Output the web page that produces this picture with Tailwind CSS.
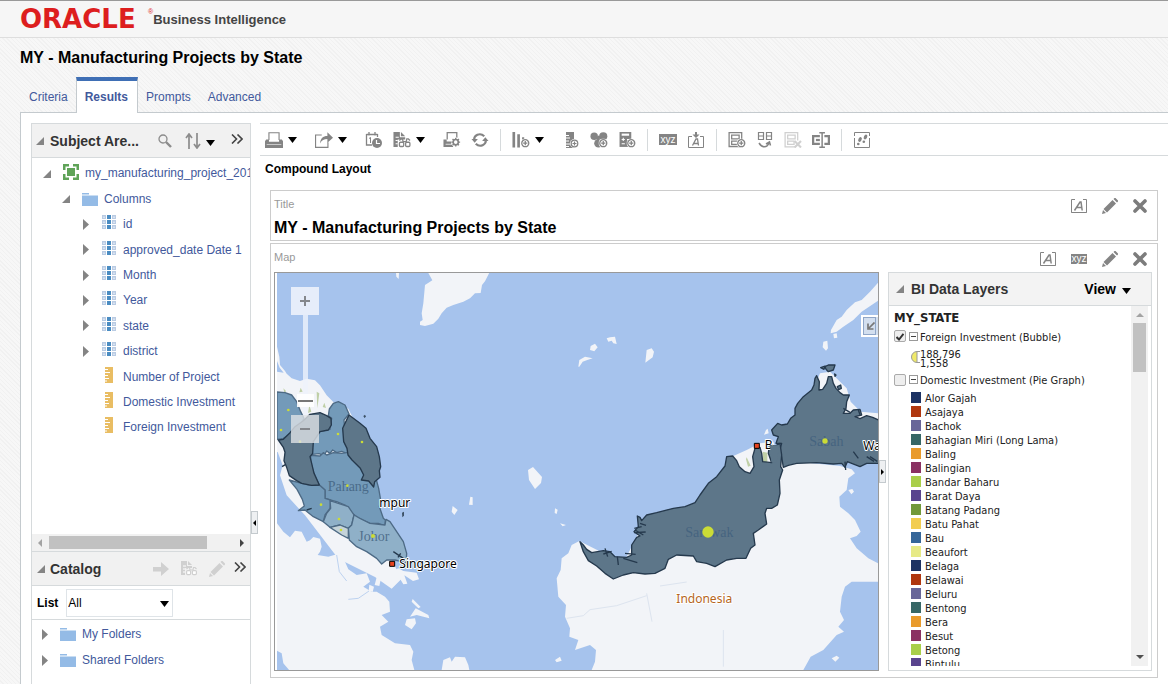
<!DOCTYPE html>
<html lang="en">
<head>
    <meta charset="UTF-8">
    <meta name="viewport" content="width=device-width, initial-scale=1.0">
    <title>MY - Manufacturing Projects by State</title>
    <script src="https://cdn.jsdelivr.net/npm/@tailwindcss/browser@4"></script>
</head>
<body class="h-screen flex flex-col overflow-hidden bg-[#f5f5f5] bg-[repeating-linear-gradient(45deg,#f7f7f7_0px,#f7f7f7_2px,#f1f1f1_2px,#f1f1f1_3px)] font-['Liberation_Sans',Arial,sans-serif] text-xs text-black">

    <!-- Icon sprite -->
    <svg class="hidden">
        <symbol id="i-caret" viewBox="0 0 9 6"><path d="M0 0h9L4.500 6z" fill="#000"/></symbol>
        <symbol id="i-open" viewBox="0 0 8 8"><path d="M8 0v8H0z" fill="#848484"/></symbol>
        <symbol id="i-closed" viewBox="0 0 6 11"><path d="M0 0l6 5.500L0 11z" fill="#848484"/></symbol>
        <symbol id="i-more" viewBox="0 0 12 10"><path d="M1 .5L5.500 5 1 9.500M6.500 .5L11 5l-4.500 4.500" fill="none" stroke="#444" stroke-width="1.600"/></symbol>
        <symbol id="i-search" viewBox="0 0 14 14"><circle cx="5" cy="5" r="4" fill="none" stroke="#8c8c8c" stroke-width="1.300"/><path d="M8 8l5 5" stroke="#8c8c8c" stroke-width="2.400"/></symbol>
        <symbol id="i-sort" viewBox="0 0 16 16"><path d="M4 16V2M1 5l3-4 3 4M12 0v14M9 11l3 4 3-4" fill="none" stroke="#8c8c8c" stroke-width="1.700"/></symbol>
        <symbol id="i-area" viewBox="0 0 16 16"><path d="M4 4h8v8H4z" fill="#5fa358"/><path d="M0 6V0h6v2.500H2.500V6zM10 0h6v6h-2.500V2.500H10zM16 10v6h-6v-2.500h3.500V10zM6 16H0v-6h2.500v3.500H6z" fill="#5fa358"/></symbol>
        <symbol id="i-folder" viewBox="0 0 16 13"><path d="M0 0h7v1.500H0zM0 2.500h16V13H0z" fill="#94bbe6"/></symbol>
        <symbol id="i-column" viewBox="0 0 14 14">
            <path d="M0 0h4v4H0zM0 5h4v4H0zM0 10h4v4H0zM10 0h4v4h-4zM10 5h4v4h-4zM10 10h4v4h-4z" fill="#b9cbe3"/>
            <path d="M1 1.500h2v1.500H1zM1 6.500h2v1.500H1zM1 11.500h2v1.500H1zM11 1.500h2v1.500h-2zM11 6.500h2v1.500h-2zM11 11.500h2v1.500h-2z" fill="#d9e3f1"/>
            <path d="M5 0h4v4H5zM5 5h4v4H5zM5 10h4v4H5z" fill="#4a8cc2"/>
        </symbol>
        <symbol id="i-measure" viewBox="0 0 8 16"><path d="M0 0h8v16H0z" fill="#e9bd63"/><path d="M0 2.500h3M0 5.500h5M0 8.500h3M0 11.500h4M0 14h2" stroke="#fff"/></symbol>
        <symbol id="i-arrow" viewBox="0 0 16 14"><path d="M0 5h8V0l8 7-8 7V9.500H0z" fill="#d0d0d0"/></symbol>
        <symbol id="i-print" viewBox="0 0 16 14"><path d="M3.500 7V.5h9V7" fill="none" stroke="#848484"/><path d="M1 6.500h2.500v2h9v-2H15l1 1.500v6H0V8z" fill="#848484"/><path d="M1.500 11h13" stroke="#ddd" stroke-width=".7"/></symbol>
        <symbol id="i-export" viewBox="0 0 16 14"><path d="M6 2.500H.5v11h11V9" fill="none" stroke="#848484"/><path d="M4.500 10C5 5.500 7 3.500 11 3.500V0l5 5-5 4.500V6C8 6 6 7 4.500 10z" fill="#848484"/></symbol>
        <symbol id="i-schedule" viewBox="0 0 16 16"><path d="M.5 2.500h11M.5 2v11H6M3 0v3.500M9 0v3.500M11.500 2v3" fill="none" stroke="#848484" stroke-width="1.300"/><path d="M3 6.500l1.500-1V11" fill="none" stroke="#848484"/><circle cx="11" cy="11" r="5" fill="#848484"/><path d="M10.500 8v3.500H14" fill="none" stroke="#fff" stroke-width="1.200"/></symbol>
        <symbol id="i-find" viewBox="0 0 16 15"><path d="M0 0h6v5h5v2H4v7H0z" fill="currentColor"/><path d="M7 0l4 4H7z" fill="currentColor"/><path d="M2 5h3M2 8h2M2 11h2" stroke="#fff"/><path d="M5.500 8L7 6.500h1.500L9 9h3l.5-2.500H14L15.500 8" fill="none" stroke="currentColor" stroke-width="1.200"/><rect x="5.600" y="9.600" width="4" height="4" rx="1" fill="#fff" stroke="currentColor" stroke-width="1.200"/><rect x="11.400" y="9.600" width="4" height="4" rx="1" fill="#fff" stroke="currentColor" stroke-width="1.200"/></symbol>
        <symbol id="i-gear" viewBox="-4.500 -4.500 9 9"><circle r="4.500" fill="#fff"/><circle r="2.400" fill="none" stroke="#848484" stroke-width="1.500"/><path d="M0-4.200v1.600M0 2.600v1.600M-4.200 0h1.600M2.600 0h1.600M-3-3l1.200 1.200M3 3L1.800 1.800M3-3L1.800-1.800M-3 3l1.200-1.200" stroke="#848484" stroke-width="1.300"/></symbol>
        <symbol id="i-plus" viewBox="-4.500 -4.500 9 9"><circle r="4.500" fill="#fff"/><circle r="3.300" fill="none" stroke="#848484" stroke-width="1.200"/><path d="M-2 0h4M0-2v4" stroke="#848484" stroke-width="1.200"/></symbol>
        <symbol id="i-print-options" viewBox="0 0 16 15"><path d="M3.500 7V.5h9V6" fill="none" stroke="#848484" stroke-width="1.200"/><path d="M0 7h3v2h6v5H0z" fill="#848484"/><path d="M2 11.500h6" stroke="#fff" stroke-width=".7"/><use href="#i-gear" x="7" y="5" width="9" height="9"/></symbol>
        <symbol id="i-refresh" viewBox="0 0 16 15"><path d="M2.500 8C2 3 8 0 12 4" fill="none" stroke="#848484" stroke-width="2"/><path d="M0 6.500h6L3 10zM16 8.500h-6L13 5z" fill="#848484"/><path d="M13.500 7C14 12 8 15 4 11" fill="none" stroke="#848484" stroke-width="2"/></symbol>
        <symbol id="i-new-view" viewBox="0 0 16 15"><path d="M0 0h2.500v14.500H0zM4.500 2H7v12.500H4.500z" fill="#848484"/><path d="M9 7.500h1.500M10 5v3" stroke="#848484" stroke-width="2"/><use href="#i-plus" x="7.500" y="6" width="9" height="9"/></symbol>
        <symbol id="i-new-measure" viewBox="0 0 16 16"><path d="M3 0h8v16H3z" fill="#848484"/><path d="M3 3.500h3M3 6h4M3 9h3M3 12h4M3 14.500h3" stroke="#fff"/><use href="#i-plus" x="7" y="7" width="9" height="9"/></symbol>
        <symbol id="i-new-group" viewBox="0 0 16 15"><circle cx="3.500" cy="4" r="3.500" fill="#848484"/><circle cx="12" cy="4" r="3.800" fill="#848484"/><circle cx="7.500" cy="10.500" r="4" fill="#848484"/><path d="M6 7l3-3" stroke="#848484" stroke-width="3"/><use href="#i-plus" x="7.500" y="6" width="9" height="9"/></symbol>
        <symbol id="i-new-calc" viewBox="0 0 16 15"><path d="M1 0h11v14H1z" fill="#848484"/><path d="M3 1.500h7v2H3z" fill="#fff"/><path d="M3 7h3M4.500 5.500v3M3 11h3M8 7h3" stroke="#fff"/><use href="#i-plus" x="7.500" y="6" width="9" height="9"/></symbol>
        <symbol id="i-format" viewBox="0 0 16 14"><path d="M4 .5H.5v13H4M12 .5h3.500v13H12M.5 13.500h15" fill="none" stroke="#848484"/><path d="M3.500 11.500L9 3h1l1.200 8.500M5.500 8.500h5" fill="none" stroke="#848484" stroke-width="1.500"/></symbol>
        <symbol id="i-import" viewBox="0 0 16 16"><path d="M4 4.500H.5v11h15v-11H12" fill="none" stroke="#848484"/><path d="M4.500 13.500L8 7h1.500l1 6.500M6 11.500h4" fill="none" stroke="#848484" stroke-width="1.300"/><path d="M7 0h2v2.500h2.500L8 6 4.500 2.500H7z" fill="#848484"/></symbol>
        <symbol id="i-duplicate" viewBox="0 0 16 15"><path d="M.6.6h11.800v13H.6zM3 3h7v3.500H3zM3 8.500h7v3H3z" fill="none" stroke="#848484" stroke-width="1.200"/><use href="#i-plus" x="7.500" y="6" width="9" height="9"/></symbol>
        <symbol id="i-views" viewBox="0 0 16 16"><path d="M1.500.5h5v7h-5zM9.500.5h5v7h-5zM1.500 4h5M9.500 4h5" fill="none" stroke="#848484" stroke-width="1.200"/><path d="M2 11c3 5 8 5 10 0M9 12l3.500-2 1 3.500" fill="none" stroke="#848484" stroke-width="1.500"/></symbol>
        <symbol id="i-remove" viewBox="0 0 16 15"><path d="M10 14H.6V.6h11.800V8M3 3h7v3.500H3zM3 8.500h6v3H3z" fill="none" stroke="#d0d0d0" stroke-width="1.200"/><path d="M9.500 8.500l6 6M15.500 8.500l-6 6" stroke="#d0d0d0" stroke-width="2"/></symbol>
        <symbol id="i-rename" viewBox="0 0 16 14"><path d="M7 3.500H1v7h6M11 3.500h4v7h-4" fill="none" stroke="#848484" stroke-width="2"/><path d="M3.500 7H7" stroke="#848484" stroke-width="2"/><path d="M6.500 .6h2q.5 0 .5 1 0-1 .5-1h2M6.500 13.400h2q.5 0 .5-1 0 1 .5 1h2M9 1v12" fill="none" stroke="#848484" stroke-width="1.300"/></symbol>
        <symbol id="i-steps" viewBox="0 0 16 16"><path d="M4 .5H.5V4M.5 6v9.500h15V6M4 .5h11.500V4" fill="none" stroke="#848484"/><ellipse cx="6" cy="7.500" rx="1.600" ry="2.600" transform="rotate(25 6 7.500)" fill="#848484"/><circle cx="4.300" cy="12" r="1.300" fill="#848484"/><ellipse cx="11.500" cy="5" rx="1.600" ry="2.600" transform="rotate(25 11.500 5)" fill="#848484"/><circle cx="9.800" cy="9.700" r="1.300" fill="#848484"/></symbol>
        <symbol id="i-pencil" viewBox="0 0 16 16"><path d="M10.500 2l3.500 3.500-9 9L1.500 11zM11.500 1l1-1h1L16 2.500v1l-1 1zM1 12l3 3-4 1z" fill="currentColor"/></symbol>
        <symbol id="i-close" viewBox="0 0 14 14"><path d="M2 2l10 10M12 2L2 12" stroke="#7c7c7c" stroke-width="3.600" stroke-linecap="round"/></symbol>
    </svg>

    <!-- Branding -->
    <header class="h-[38px] shrink-0 flex items-center pl-5 bg-[#f6f6f6] border-t border-t-[#999] border-b border-b-[#dedede]">
        <span class="w-[128px] text-[26px] leading-none font-bold font-['DejaVu_Sans',sans-serif] text-[#dd1e1e]">ORACLE</span>
        <sup class="-top-2 text-[7px] leading-none text-[#dd1e1e]">®</sup>
        <span class="pt-px text-[13px] font-bold text-[#444]">Business Intelligence</span>
    </header>

    <h1 class="h-[39px] shrink-0 pl-5 text-base leading-10 font-bold">MY - Manufacturing Projects by State</h1>

    <!-- Tabs -->
    <nav class="relative z-10 -mb-px h-9 shrink-0 flex pl-5 text-[#42599c]">
        <a href="#" class="px-[9px] pt-3">Criteria</a>
        <a href="#" class="-ml-px h-9 pl-2 pr-[9px] pt-2 border-x border-t-4 border-x-[#c4cace] border-t-[#3f6fb5] bg-white font-bold">Results</a>
        <a href="#" class="px-2 pt-3">Prompts</a>
        <a href="#" class="pl-[9px] pt-3">Advanced</a>
    </nav>

    <div class="flex-1 min-h-0 ml-5 pl-[10px] pt-[10px] flex bg-white border-l border-t border-[#c4cace]">
        <!-- Left pane -->
        <aside class="w-[220px] shrink-0 flex flex-col border-x border-t border-[#d6dadc]">
            <div class="h-[34px] shrink-0 flex items-center pl-1 pr-[7px] bg-[#f1f1f1] border-b border-[#d6dadc]">
                <svg class="size-2 mr-[6px]"><use href="#i-open"/></svg>
                <h2 class="flex-1 text-sm font-bold text-[#333]">Subject Are...</h2>
                <button aria-label="Search" class="mr-[13px]"><svg class="size-[14px]"><use href="#i-search"/></svg></button>
                <button aria-label="Sort" class="flex items-center gap-[5px] mr-4"><svg class="size-4"><use href="#i-sort"/></svg><svg class="w-[9px] h-[6px] mt-1"><use href="#i-caret"/></svg></button>
                <button aria-label="More" class="-mt-1"><svg class="w-3 h-[10px]"><use href="#i-more"/></svg></button>
            </div>
            <div class="flex-1 min-h-0 overflow-hidden pt-[3px]">
                <ul id="columnTree" class="h-[279px] grid auto-rows-fr items-center text-[#42599c] whitespace-nowrap"></ul>
            </div>
            <div class="h-[17px] shrink-0 flex items-center justify-between px-[6px] bg-[#f1f1f1]">
                <svg class="w-1 h-2" viewBox="0 0 4 8"><path d="M4 0v8L0 4z" fill="#a3a3a3"/></svg>
                <div class="h-[13px] w-[158px] mr-auto ml-[7px] bg-[#c1c1c1]"></div>
                <svg class="w-1 h-2" viewBox="0 0 4 8"><path d="M0 0v8l4-4z" fill="#444"/></svg>
            </div>
            <div class="h-[35px] shrink-0 flex items-center pl-[5px] pr-1 bg-[#f1f1f1] border-y border-[#d6dadc]">
                <svg class="size-2 mr-[5px]"><use href="#i-open"/></svg>
                <h2 class="flex-1 text-sm font-bold text-[#333]">Catalog</h2>
                <button aria-label="Open" disabled><svg class="w-4 h-[14px] mr-3"><use href="#i-arrow"/></svg></button>
                <button aria-label="Preview" disabled class="text-[#d0d0d0]"><svg class="w-4 h-[15px] mr-3"><use href="#i-find"/></svg></button>
                <button aria-label="Edit" disabled class="text-[#d0d0d0]"><svg class="size-4 mr-[9px]"><use href="#i-pencil"/></svg></button>
                <button aria-label="More" class="-mt-1"><svg class="w-3 h-[10px]"><use href="#i-more"/></svg></button>
            </div>
            <div class="h-[34px] shrink-0 flex items-center pl-[5px] border-b border-[#d6dadc]">
                <label for="catalogList" class="mr-2 font-bold">List</label>
                <div class="relative">
                    <select id="catalogList" class="appearance-none w-[107px] h-7 pl-px border border-[#dfe4e8] bg-white"><option>All</option></select>
                    <svg class="absolute right-1 top-[12px] w-[9px] h-[6px] pointer-events-none"><use href="#i-caret"/></svg>
                </div>
            </div>
            <ul class="h-[64px] shrink-0 pt-px text-[#42599c]">
                <li class="h-[26px] flex items-center pl-[10px]"><svg class="w-[6px] h-[11px] mr-3"><use href="#i-closed"/></svg><svg class="w-4 h-[13px] mr-[6px]"><use href="#i-folder"/></svg><a href="#">My Folders</a></li>
                <li class="h-[26px] flex items-center pl-[10px]"><svg class="w-[6px] h-[11px] mr-3"><use href="#i-closed"/></svg><svg class="w-4 h-[13px] mr-[6px]"><use href="#i-folder"/></svg><a href="#">Shared Folders</a></li>
            </ul>
        </aside>

        <!-- Splitter -->
        <div class="w-[9px] shrink-0 flex flex-col justify-end pb-[150px]">
            <button aria-label="Collapse pane" class="w-[7px] h-[23px] flex items-center justify-center border border-[#c4cace] bg-[#eef0f2]"><svg class="w-[3px] h-[6px]" viewBox="0 0 3 6"><path d="M3 0v6L0 3z"/></svg></button>
        </div>

        <main class="flex-1 min-w-0 flex flex-col">
            <div id="toolbar" class="h-[33px] shrink-0 flex items-center gap-[10px] pl-[5px] border-y border-[#d6dadc]"></div>
            <h2 class="h-[34px] shrink-0 pl-[5px] leading-[26px] font-bold">Compound Layout</h2>

            <div class="flex-1 min-h-0 flex flex-col gap-[2px] pl-[10px] pr-[10px] pb-[6px]">
                <!-- Title view -->
                <section class="h-[51px] shrink-0 flex justify-between pl-[3px] pr-[10px] border border-[#ccc]">
                    <div>
                        <p class="pt-[6px] text-[11px] leading-[14px] text-[#999]">Title</p>
                        <p class="pt-[7px] text-base leading-5 font-bold">MY - Manufacturing Projects by State</p>
                    </div>
                    <div class="flex items-center gap-[15px] h-[29px]">
                        <button aria-label="Format"><svg class="w-4 h-[14px]"><use href="#i-format"/></svg></button>
                        <button aria-label="Edit" class="text-[#848484]"><svg class="size-4"><use href="#i-pencil"/></svg></button>
                        <button aria-label="Remove"><svg class="size-[14px]"><use href="#i-close"/></svg></button>
                    </div>
                </section>

                <!-- Map view -->
                <section class="flex-1 min-h-0 flex flex-col pl-[3px] pr-[5px] pb-[6px] border border-[#ccc]">
                    <div class="h-7 shrink-0 flex justify-between pr-[5px]">
                        <p class="pt-[6px] text-[11px] leading-[14px] text-[#999]">Map</p>
                        <div class="flex items-center gap-[15px] h-[29px]">
                            <button aria-label="Format"><svg class="w-4 h-[14px]"><use href="#i-format"/></svg></button>
                            <button class="w-4 h-[10px] bg-[#848484] text-[10px] leading-[7px] text-white">xyz</button>
                            <button aria-label="Edit" class="text-[#848484]"><svg class="size-4"><use href="#i-pencil"/></svg></button>
                            <button aria-label="Remove"><svg class="size-[14px]"><use href="#i-close"/></svg></button>
                        </div>
                    </div>
                    <div class="flex-1 min-h-0 flex">
                        <div class="relative flex-1 min-w-0 pl-[2px] border border-[#999] overflow-hidden">
                            <svg class="w-full h-full bg-[#a6c3ed]" viewBox="21 9 1803 1191" preserveAspectRatio="xMinYMin slice">
                                <!-- Base land -->
                                <g fill="#f2f4f8">
                                    <path d="M475 9l12 22-22 14-5 55-5 30 3 20-8 5v10l15 3 25-7 15-15 10-16 15-17 20-8 30-10 20-10 15-15 17-1 4-24 9-11 10-20 3-6zM378 9h9l-1 18-7-7z"/>
                                    <path d="M21 230l7 30 2 25 15 18 5 8 15 14 25 8 20-7 25 5 15 15 20 30 20 20 45 20 60 120 30 260 70 130-30 30-50-35-110-55-100-130-55-60-20-60 8-30-15-40H21V305l20 3-12-15-8-20z"/>
                                    <path d="M21 760l19 25 20 17 15-20 20 3 15 30 10-4 10-10 20 5 5 24-5 15-7 10 32 5 35-10 15 25 10 23 25 17 30-5 10 25-20 15 25 15h15l25 15 13 15 2 30-25 10 20 20-25 15 5 25 40 25 45 5 10 20-5 25 12 45H70l-30-35-5-30-14-8z"/>
                                    <path d="M318 900l8 8-6 10-8-8zM320 922l12 8-4 18-14-3zM298 944l14 6-4 16-12-4zM365 905l20-10 15 8 40 5 7 20-18 5-26-17 9 25-12 2-15-25zM428 987l24 24-7 4-20-20zM437 1015l38 20 3 10-38-10-20 5zM410 1048l25-3 3 15-13 18-20-13zM548 708l15 12-10 15-8-10zM601 680l7 2v23l-11-1zM515 1200l5-30 20-8 5 13 10-15 30 2 10 23 3 15zM774 600l15-9 27 30-3 18-18 18-18-27zM855 715l8 4-3 13-6-3zM870 760l18 5-10 4z"/>
                                    <path d="M925 290l3-20 17-10 23 5-16 5-14 5-10 15zM962 228l13-7 8 11-10 12-13-4zM1010 205l10-3 15-2 5 22-10-2-5-8-10 3zM1130 240l15-5 7 10-4 17-22 16z"/>
                                    <path d="M1824 38l-24 27-25 25-20 7-25 23-15 20-15 10-17 30-1 10 18-5 20-15 30-20 25-25 20-13 29-20zM1690 192l10-2 2 13-10 2zM1660 215l12-3 2 23-6 7-10-10zM1488 480l5-4 3 14-14 4z"/>
                                    <g transform="translate(810 480)">
                                        <path d="M118 333L95 345 85 370 65 385 62 420 50 445 55 500 78 525 75 560 90 595 88 620 115 630 105 660 150 645 168 660 165 695 155 720H790L812 680 850 660 890 615 912 605 895 590 912 570 900 545 905 500 915 470 935 455 1014 455V400L985 385 950 355 930 325 950 318 962 305 945 270 925 250 900 230 898 200 920 180 925 145 945 130 935 118 900 108 720 90 700 35 660 40 620 60 575 80 570 130 470 230 310 280 250 400z"/>
                                        <path d="M925 180l12-3 5 8-8 8zM875 685l15-8 8 6-12 12zM45 690l15-10 5 12-15 5z"/>
                                    </g>
                                    <path d="M1630 360l20-50 30-5 50 50 12 40 30 30 52 5v20h-120z"/>
                                </g>
                                <path d="M200 855l8 50 22 28M235 988l30-3 32-22" fill="none" stroke="#bdd2f0" stroke-width="3"/>
                                <path d="M890 1045l50-8 20-18 80-12 90-30M1130 970l16 85M1170 948l80-12M1360 1080v110" fill="none" stroke="#dde4ef" stroke-width="3"/>
                                <path d="M40 355l8 8-4 8zM92 353l6 12-10 2zM140 365l8 5-6 45zM163 398l5 16-10-3zM118 405l6 20-10 4zM1430 562l12 25-8 3-6-22zM1478 545l14 3v30h-14z" fill="#bfcfa6"/>

                                <!-- States -->
                                <g stroke="#4d6a85" stroke-width="4" stroke-linejoin="round" fill="#739ab9">
                                    <path d="M21 366l24 2 20 7 15 20 12 30 10 20-20 35-42 25-19 3z"/>
                                    <path d="M190 400l15-5 20 10 12 27-15 18 3 40 10 20 5 25 10 10-20 5-15-6-15 4-12-8-8 10-10-7-8 14-15-6-25 3 8-46 18-23 32-7 5-33-10-8 3-20z"/>
                                    <path d="M122 556l28 2 10-10 10 7 20-7 25 2 35-5 25 25 10 20-7 15 22 3 18 17 8 30 6 35-4 20 12 35 6 5-1 18-20-8h-25l-35-15-15-13-25-27-25-10-20-5-15-5v-25l-17-15-16-35-10-30z"/>
                                    <path d="M58 630l37 10 25 6 28-1 17 15v25l17 5-2 25-15 20-5 20-30-15-25-20-20 2 18-14-6-20-16-30z"/>
                                    <g fill="#8fb0c8">
                                        <path d="M180 692l25 8 30 10 17 25-7 30-10 10-25-10-30 7-20-17 10-25 12-15z"/>
                                        <path d="M252 735l18 10 30 15 45 5 3-17 12 7 20 30 20 30 10 35-2 30-13-5-20-5h-25l-15 12-15-17-30-20-30-15-22-20-3-35 10-10z"/>
                                    </g>
                                    <path d="M180 772l30-7 25 10v30l-20-10z" fill="#c5d3d9"/>
                                </g>
                                <g fill="#5d7689" stroke="#25394d" stroke-width="4" stroke-linejoin="round">
                                    <path d="M25 510l15-2 20-20 15-18 25-18 20-19 30-5 20 9 13 8 1 20-9 15-25 5-10 15-10 15-2 35-8 10 5 20 7 30 16 35-23 1-30-6-15-8-22-15-8-25-8-20 3-25-5-15z"/>
                                    <path d="M237 435l33 25 18 15 12 30 20 25 8 30 4 30-4 12 2 20-16 13-3 16-15-18-22-3 7-15-10-20-25-25-12-15-3-20-10-20-3-40z"/>
                                    <!-- Sabah -->
                                    <g transform="translate(690 0)">
                                        <path d="M815 480L833 460 845 465 862 462 872 445 885 435 885 415 893 400 910 380 935 360 942 345 945 325 950 317 958 335 957 360 968 358 980 340 985 320 995 320 1000 340 1008 355 1020 368 1030 375 1048 375 1040 395 1038 415 1030 430 1050 430 1060 420 1080 418 1085 435 1065 440 1080 446 1100 437 1118 442 1140 452V580L1100 580 1080 590 1055 580 1042 575 1035 592 1025 580 1000 582 950 578 890 580 865 586 850 592 845 560 838 545 845 520 828 520 835 500 820 495z"/>
                                        <path d="M975 290L985 285H1005L1000 300 985 305 978 298zM962 293L975 288 972 298zM1004 312l4 3-3 4zM1012 350l10-5 2 10-8 4zM1060 545l15 20M1110 560l22 14" />
                                        <path d="M1030 415l20 12M1075 420l5 14M1100 560l22 14M1035 575l2 25" fill="none"/>
                                    </g>
                                    <!-- Sarawak -->
                                    <g transform="translate(810 480)">
                                        <path d="M120 335L130 345 140 358 155 368 190 362 210 365 225 380 260 382 275 375 275 345 290 322 300 318 282 305 295 290 292 258 300 262 305 272 320 255 350 248 400 235 435 230 465 218 480 195 505 160 530 140 555 108 560 80 578 78 590 92 598 110 615 125 630 130 642 110 638 80 645 55 660 52 665 70 668 95 695 98 685 70 688 45 705 48 720 40 725 75 722 110 728 120 718 150 720 190 712 225 695 235 680 235 675 250 680 282 655 300 640 310 645 345 632 355 618 385 590 385 560 390 525 410 500 400 470 395 460 378 410 375 385 388 375 415 345 430 315 432 280 428 250 435 220 447 195 430 170 408 145 392 130 365z"/>
                                        <path d="M283 295l22-5M282 308l35-2M285 300l25 15M300 280l18 6M255 370l32 3M250 385l42 13M195 355l8 25M190 372l25-8M232 380l3 25" fill="none"/>
                                    </g>
                                    <path d="M36 590l10-6M110 720l15-5M370 845l30 20M392 850l-8 12" fill="none"/>
                                </g>
                                <path d="M280 438l5-4 3 6-5 4zM396 728l6-3v12l-5 5z" fill="#3c5166"/>

                                <!-- Labels -->
                                <g font-size="42" fill="#3f5f7d" fill-opacity=".8" font-family="Liberation Serif, serif">
                                    <text x="173" y="662">Pahang</text>
                                    <text x="265" y="812">Johor</text>
                                    <text x="1618" y="528">Sabah</text>
                                    <text x="1246" y="800">Sarawak</text>
                                </g>
                                <g font-size="36" font-family="Noto Sans, sans-serif" stroke="#fff" stroke-width="6" stroke-linejoin="round" paint-order="stroke">
                                    <text x="328" y="710">mpur</text>
                                    <text x="388" y="894">Singapore</text>
                                    <text x="1219" y="998" fill="#b5651d">Indonesia</text>
                                    <text x="1484" y="538">B</text>
                                    <text x="1780" y="541">Wa</text>
                                </g>
                                <path d="M1500 526h28l-8 51h-16z" fill="#5d7689"/>
                                <g fill="#e8431f" stroke="#000" stroke-width="3">
                                    <path d="M359 874h15v15h-15zM1453 520h15v15h-15z"/>
                                </g>

                                <!-- Bubbles -->
                                <g fill="#cbdc36">
                                    <circle cx="1314" cy="786" r="17"/>
                                    <circle cx="1665" cy="513" r="8"/>
                                    <circle cx="309" cy="798" r="6"/>
                                    <circle cx="204" cy="492" r="4"/><circle cx="276" cy="516" r="4"/><circle cx="232" cy="647" r="4"/>
                                    <circle cx="153" cy="704" r="4"/><circle cx="207" cy="747" r="4"/><circle cx="213" cy="780" r="4"/>
                                    <circle cx="55" cy="420" r="4"/><circle cx="33" cy="480" r="4"/><circle cx="90" cy="515" r="4"/>
                                </g>
                            </svg>

                            <!-- Zoom control -->
                            <div class="absolute left-4 top-[14px] flex flex-col items-center">
                                <button aria-label="Zoom in" class="size-7 flex items-center justify-center bg-[#edf2fb]/90"><svg class="size-[10px]" viewBox="0 0 10 10"><path d="M5 0v10M0 5h10" stroke="#84878c" stroke-width="2"/></svg></button>
                                <div class="w-[5px] h-[100px] bg-[#eef3fb]/80"></div>
                                <button aria-label="Zoom out" class="size-7 flex items-center justify-center bg-[#dfe2e6]/80"><svg class="w-[10px] h-[2px]" viewBox="0 0 10 2"><path d="M0 0h10v2H0z" fill="#84878c"/></svg></button>
                                <div class="absolute top-[107px] w-[17px] h-[13px] flex items-center bg-white/90"><div class="mx-px w-full h-[2px] bg-[#777]"></div></div>
                            </div>
                            <button aria-label="Overview map" class="absolute right-0 top-[42px] w-[17px] h-[22px] flex items-center justify-center border-2 border-r-0 border-white bg-[#d3dfef] outline-1 -outline-offset-3 outline-[#8fa6c8]"><svg class="size-2" viewBox="0 0 8 8"><path d="M7.500 .5L2 6M1 1.500V7h5.500" fill="none" stroke="#777" stroke-width="1.700"/></svg></button>
                        </div>

                        <div class="w-[9px] shrink-0 flex items-center">
                            <button aria-label="Collapse legend" class="w-[7px] h-[23px] flex items-center justify-center border border-[#c4cace] bg-[#eef0f2]"><svg class="w-[3px] h-[6px]" viewBox="0 0 3 6"><path d="M0 0v6l3-3z"/></svg></button>
                        </div>

                        <!-- Legend -->
                        <div class="w-[264px] shrink-0 flex flex-col border border-[#d6dadc]">
                            <div class="h-[33px] shrink-0 flex items-center pl-[7px] pr-5 bg-[#f3f3f3] border-b border-[#d6dadc]">
                                <svg class="size-2 mr-[7px]"><use href="#i-open"/></svg>
                                <h2 class="flex-1 text-sm font-bold text-[#333]">BI Data Layers</h2>
                                <button class="flex items-center gap-[6px] text-sm font-bold">View <svg class="w-[9px] h-[6px] mt-1"><use href="#i-caret"/></svg></button>
                            </div>
                            <div class="flex-1 min-h-0 mb-1 mr-[3px] flex overflow-hidden font-['DejaVu_Sans_Condensed','DejaVu_Sans',sans-serif] text-[11px] text-[#222]">
                                <div class="flex-1 min-w-0 pl-[5px] overflow-hidden whitespace-nowrap">
                                    <h3 class="pt-1 text-[13px] leading-4 font-bold">MY_STATE</h3>
                                    <div class="h-6 flex items-center">
                                        <label class="relative flex items-center gap-[14px]">
                                            <input type="checkbox" checked class="peer appearance-none size-3 -mt-1 border border-[#aaa] rounded-xs bg-[#eee]">
                                            <svg class="absolute left-[2px] top-[2px] size-2 hidden peer-checked:block" viewBox="0 0 8 8"><path d="M.5 4L3 6.500 7.500 .8" fill="none" stroke="#333" stroke-width="2"/></svg>
                                            <span>Foreign Investment (Bubble)</span>
                                        </label>
                                        <button aria-label="Collapse" class="absolute ml-[15px] -mt-1 size-[9px] flex items-center justify-center border border-[#999]"><span class="w-[5px] h-px bg-[#444]"></span></button>
                                    </div>
                                    <div class="h-[21px] flex items-start pl-[17px]">
                                        <svg class="w-[9px] h-3 mt-px" viewBox="0 0 9 12"><path d="M6 .5a5.500 5.500 0 0 0 0 11z" fill="#f0ea6a" stroke="#999"/><path d="M6 .5h3M6 11.500h3" stroke="#999"/></svg>
                                        <p class="leading-[9px]">188,796<br>1,558</p>
                                    </div>
                                    <div class="h-[21px] flex items-center">
                                        <label class="flex items-center gap-[14px]">
                                            <input type="checkbox" class="appearance-none size-3 -mt-1 border border-[#aaa] rounded-xs bg-[#eee]">
                                            <span>Domestic Investment (Pie Graph)</span>
                                        </label>
                                        <button aria-label="Collapse" class="absolute ml-[15px] -mt-1 size-[9px] flex items-center justify-center border border-[#999]"><span class="w-[5px] h-px bg-[#444]"></span></button>
                                    </div>
                                    <ul id="legend" class="pl-[17px]"></ul>
                                </div>
                                <div class="w-[17px] shrink-0 flex flex-col items-center py-[7px] bg-[#f1f1f1]">
                                    <svg class="w-2 h-1" viewBox="0 0 8 4"><path d="M0 4h8L4 0z" fill="#a3a3a3"/></svg>
                                    <div class="mt-[6px] mb-auto w-[13px] h-[49px] bg-[#c1c1c1]"></div>
                                    <svg class="w-2 h-1" viewBox="0 0 8 4"><path d="M0 0h8L4 4z" fill="#505050"/></svg>
                                </div>
                            </div>
                        </div>
                    </div>
                </section>
            </div>
        </main>
    </div>

    <script>
        // Toolbar: '|' draws a separator
        const tools = [
            { icon: 'print', label: 'Print', menu: true },
            { icon: 'export', label: 'Export', menu: true },
            { icon: 'schedule', label: 'Schedule' },
            { icon: 'find', label: 'Preview', menu: true },
            { icon: 'print-options', label: 'Print and export options' },
            { icon: 'refresh', label: 'Refresh' },
            '|',
            { icon: 'new-view', label: 'New view', menu: true },
            { icon: 'new-measure', label: 'New calculated measure' },
            { icon: 'new-group', label: 'New group' },
            { icon: 'new-calc', label: 'New calculated item' },
            '|',
            { text: 'xyz' },
            { icon: 'import', label: 'Import formatting' },
            '|',
            { icon: 'duplicate', label: 'Duplicate view' },
            { icon: 'views', label: 'Switch view' },
            { icon: 'remove', label: 'Remove view' },
            { icon: 'rename', label: 'Rename' },
            '|',
            { icon: 'steps', label: 'Selection steps' }
        ];

        document.getElementById('toolbar').innerHTML = tools.map(t => {
            if (t === '|') return '<span class="mx-px w-px h-[22px] bg-[#d6dadc]"></span>';
            if (t.text) return `<button class="w-[18px] h-[11px] bg-[#848484] text-[10px] leading-[8px] text-white">${t.text}</button>`;
            const menu = t.menu ? '<svg class="w-[9px] h-[6px] mt-px"><use href="#i-caret"/></svg>' : '';
            return `<button aria-label="${t.label}" class="flex items-center gap-[5px] text-[#848484] ${t.menu ? 'mr-2' : ''}"><svg class="w-[18px] h-4"><use href="#i-${t.icon}"/></svg>${menu}</button>`;
        }).join('');

        // Subject area tree
        const columns = ['id', 'approved_date Date 1', 'Month', 'Year', 'state', 'district'];
        const measures = ['Number of Project', 'Domestic Investment', 'Foreign Investment'];

        document.getElementById('columnTree').innerHTML =
            `<li class="flex items-center pl-[11px]"><svg class="size-2 mr-3"><use href="#i-open"/></svg><svg class="size-4 mr-[6px] -mt-1 shrink-0"><use href="#i-area"/></svg><a href="#" class="-mt-px">my_manufacturing_project_2016</a></li>
            <li class="flex items-center pl-[30px]"><svg class="size-2 mr-3"><use href="#i-open"/></svg><svg class="w-4 h-[13px] mr-[6px]"><use href="#i-folder"/></svg><a href="#">Columns</a></li>` +
            columns.map(c => `<li class="flex items-center pl-[51px]"><svg class="w-[6px] h-[11px] mr-[13px]"><use href="#i-closed"/></svg><svg class="size-[14px] mr-[7px] -mt-1"><use href="#i-column"/></svg><a href="#">${c}</a></li>`).join('') +
            measures.map(m => `<li class="flex items-center pl-[73px]"><svg class="w-2 h-4 mr-[10px] -mt-1"><use href="#i-measure"/></svg><a href="#">${m}</a></li>`).join('');

        // Pie graph legend, colours repeat every twelve districts
        const swatches = ['bg-[#1c3263]', 'bg-[#b0370f]', 'bg-[#686699]', 'bg-[#376766]', 'bg-[#e99b2c]', 'bg-[#8a3162]', 'bg-[#a9cf4a]', 'bg-[#59448e]', 'bg-[#72993a]', 'bg-[#f2cd51]', 'bg-[#356699]', 'bg-[#e7ea86]'];
        const districts = ['Alor Gajah', 'Asajaya', 'Bachok', 'Bahagian Miri (Long Lama)', 'Baling', 'Balingian', 'Bandar Baharu', 'Barat Daya', 'Batang Padang', 'Batu Pahat', 'Bau', 'Beaufort', 'Belaga', 'Belawai', 'Beluru', 'Bentong', 'Bera', 'Besut', 'Betong', 'Bintulu'];

        document.getElementById('legend').innerHTML = districts.map((d, i) => `
            <li class="h-[14px] flex items-start gap-1 overflow-hidden leading-[14px]"><span class="w-[10px] h-[11px] ${swatches[i % 12]}"></span>${d}</li>
        `).join('');
    </script>
</body>
</html>
